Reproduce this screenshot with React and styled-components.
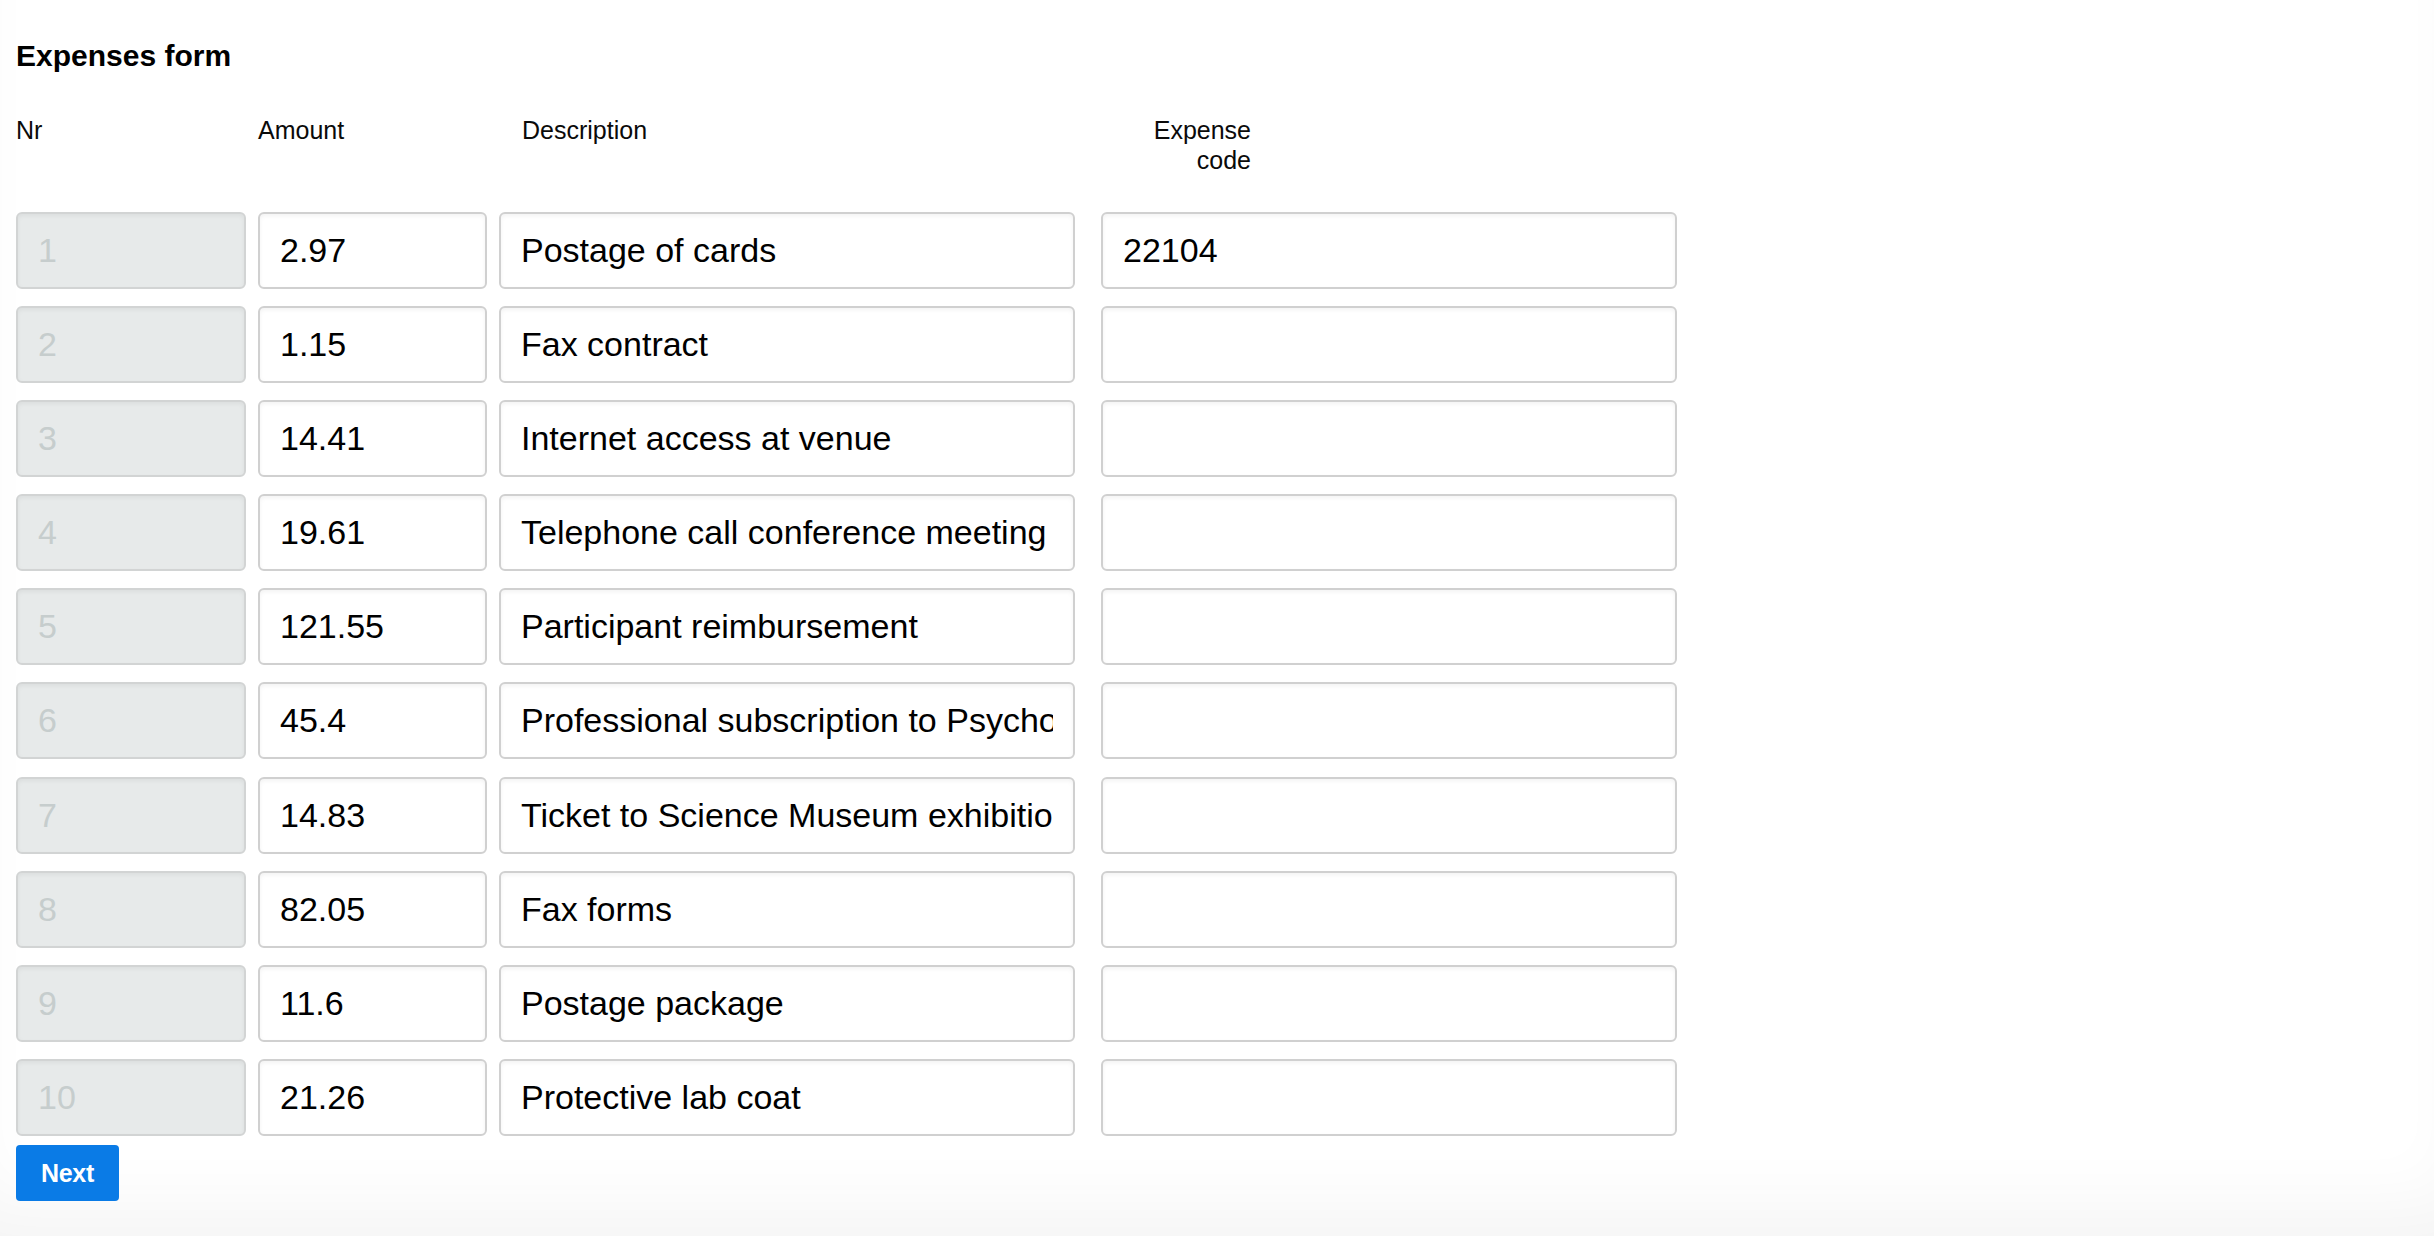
import React from "react";
import styled, { createGlobalStyle } from "styled-components";

const GlobalStyle = createGlobalStyle`
  html, body {
    margin: 0;
    padding: 0;
    background: #ffffff;
  }
  body {
    font-family: "Liberation Sans", Arial, Helvetica, sans-serif;
    color: #111;
  }
`;

const Page = styled.div`
  min-height: 100vh;
  box-sizing: border-box;
  padding: 38px 16px 0 16px;
  box-shadow: inset 0 -60px 70px -30px rgba(0, 0, 0, 0.045);
`;

const Title = styled.h1`
  margin: 0;
  font-size: 30px;
  line-height: 36px;
  font-weight: 700;
  color: #000;
`;

const HeaderRow = styled.div`
  display: flex;
  margin-top: 41px;
`;

const Label = styled.div`
  box-sizing: border-box;
  width: ${(p) => p.$w}px;
  padding-left: ${(p) => p.$pl || 0}px;
  text-align: ${(p) => p.$align || "left"};
  font-size: 25px;
  line-height: 30px;
  color: #0a0a0a;
`;

const Rows = styled.div`
  display: flex;
  flex-direction: column;
  gap: 17.2px;
  margin-top: 36.5px;
`;

const Row = styled.div`
  display: grid;
  grid-template-columns: 230px 229px 576px 576px;
  column-gap: 12px;
  height: 77px;

  & > *:nth-child(4) {
    margin-left: 14px;
  }
`;

const Field = styled.input`
  box-sizing: border-box;
  width: 100%;
  height: 77px;
  margin: 0;
  padding: 0 20px;
  border: 2px solid ${(p) => (p.$locked ? "#d2d4d4" : "#d0d0d0")};
  border-radius: 6px;
  background: ${(p) => (p.$locked ? "#e7eaea" : "#ffffff")};
  box-shadow: inset 0 2px 4px rgba(0, 0, 0, 0.05);
  font-family: "Liberation Sans", Arial, Helvetica, sans-serif;
  font-size: 34px;
  color: ${(p) => (p.$locked ? "#c6cdcd" : "#000")};
  outline: none;
  -webkit-text-fill-color: ${(p) => (p.$locked ? "#c6cdcd" : "#000")};
  opacity: 1;
`;

const NextButton = styled.button`
  display: block;
  margin-top: 9px;
  width: 103px;
  height: 56px;
  padding: 0;
  border: none;
  border-radius: 4px;
  background: #0a7be6;
  color: #fff;
  font-family: "Liberation Sans", Arial, Helvetica, sans-serif;
  font-size: 25px;
  font-weight: 700;
  letter-spacing: -0.3px;
  cursor: pointer;
`;

const data = [
  ["2.97", "Postage of cards", "22104"],
  ["1.15", "Fax contract", ""],
  ["14.41", "Internet access at venue", ""],
  ["19.61", "Telephone call conference meeting", ""],
  ["121.55", "Participant reimbursement", ""],
  ["45.4", "Professional subscription to Psychology Today", ""],
  ["14.83", "Ticket to Science Museum exhibition", ""],
  ["82.05", "Fax forms", ""],
  ["11.6", "Postage package", ""],
  ["21.26", "Protective lab coat", ""],
];

export default function App() {
  return (
    <>
      <GlobalStyle />
      <Page>
        <Title>Expenses form</Title>
        <HeaderRow>
          <Label $w={242}>Nr</Label>
          <Label $w={264}>Amount</Label>
          <Label $w={600}>Description</Label>
          <Label $w={129} $align="right">
            Expense code
          </Label>
        </HeaderRow>
        <Rows>
          {data.map(([amount, desc, code], i) => (
            <Row key={i}>
              <Field $locked disabled readOnly value={String(i + 1)} />
              <Field readOnly value={amount} />
              <Field readOnly value={desc} />
              <Field readOnly value={code} />
            </Row>
          ))}
        </Rows>
        <NextButton>Next</NextButton>
      </Page>
    </>
  );
}
